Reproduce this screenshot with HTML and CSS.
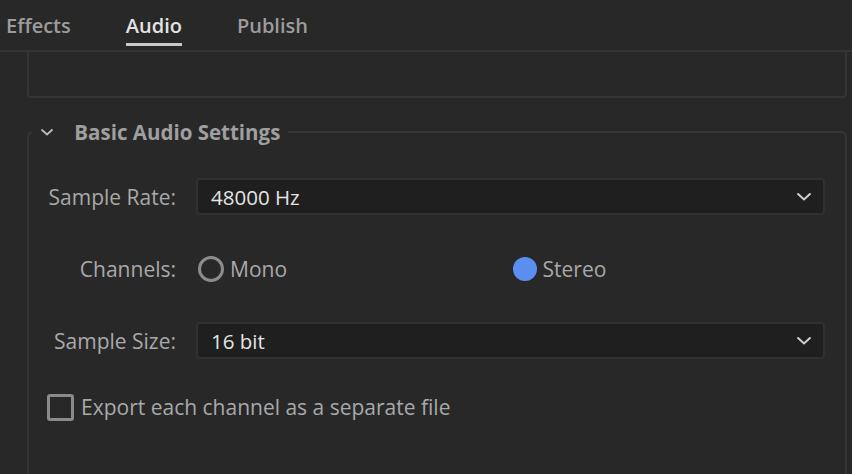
FILE: index.html
```html
<!DOCTYPE html>
<html lang="en">
<head>
    <meta charset="UTF-8">
    <title>Export Settings</title>
    <link rel="stylesheet" href="styles.css">
</head>
<body>
    <div id="wrap">
        <nav class="tabs">
            <a href="#" class="tab">Effects</a>
            <a href="#" class="tab active">Audio</a>
            <a href="#" class="tab">Publish</a>
        </nav>
        <div class="panel">
            <div class="prev_box"></div>
            <fieldset class="group">
                <legend class="group_title">
                    <svg class="twisty" width="14" height="8" viewBox="0 0 14 8"><path d="M1.5 1.5 L7 6.5 L12.5 1.5" fill="none" stroke="#bdbdbd" stroke-width="1.8"/></svg>
                    Basic Audio Settings
                </legend>
                <div class="form">
                    <label class="field_label">Sample Rate:</label>
                    <div class="select">
                        <span>48000 Hz</span>
                        <svg width="16" height="9" viewBox="0 0 16 9"><path d="M1.5 1.5 L8 7.5 L14.5 1.5" fill="none" stroke="#cfcfcf" stroke-width="2"/></svg>
                    </div>

                    <label class="field_label">Channels:</label>
                    <div class="radios">
                        <span class="radio"><i class="dot"></i>Mono</span>
                        <span class="radio"><i class="dot on"></i>Stereo</span>
                    </div>

                    <label class="field_label">Sample Size:</label>
                    <div class="select">
                        <span>16 bit</span>
                        <svg width="16" height="9" viewBox="0 0 16 9"><path d="M1.5 1.5 L8 7.5 L14.5 1.5" fill="none" stroke="#cfcfcf" stroke-width="2"/></svg>
                    </div>
                </div>
                <div class="check">
                    <i class="box"></i>Export each channel as a separate file
                </div>
            </fieldset>
        </div>
    </div>
</body>
</html>
```

FILE: styles.css
```css
/* reset */
html, body {margin: 0; height: 100%;}
body {
    background: #282828;
    font-family: 'Open Sans', 'Noto Sans', sans-serif;
    color: #a9a9a9;
    overflow: hidden;
}
a {text-decoration: none;}
#wrap {height: 474px;}

/* tabs */
.tabs {
    display: flex;
    gap: 55px;
    height: 50px;
    padding-left: 6px;
    border-bottom: 2px solid #353535;
}
.tab {
    position: relative;
    font-size: 20px;
    font-weight: 600;
    line-height: 52px;
    color: #9c9c9c;
}
.tab.active {color: #e2e2e2;}
.tab.active::after {
    content: '';
    position: absolute;
    left: 0;
    right: 0;
    bottom: 4px;
    height: 3px;
    background: #c9c9c9;
}

/* panel */
.panel {padding: 0 5px 0 27px;}
.prev_box {
    height: 44px;
    border: 2px solid #353535;
    border-top: none;
    border-radius: 0 0 4px 4px;
}

/* group box */
.group {
    margin: 22px 0 0;
    padding: 0 20px 60px 0;
    border: 2px solid #353535;
    border-radius: 6px;
    min-width: 0;
}
.group_title {
    margin-left: 3px;
    padding: 0 8px 0 8px;
    font-size: 20.5px;
    font-weight: 700;
    line-height: 24px;
    color: #9f9f9f;
}
.twisty {margin-right: 15px; vertical-align: 4px;}

/* form rows */
.form {
    display: grid;
    grid-template-columns: 147px 1fr;
    column-gap: 20px;
    row-gap: 35px;
    align-items: center;
    margin-top: 34px;
    font-size: 21px;
}
.field_label {text-align: right;}
.select {
    display: flex;
    justify-content: space-between;
    align-items: center;
    height: 33px;
    padding: 0 11px 0 13px;
    background: #1f1f1f;
    border: 2px solid #303030;
    border-radius: 4px;
    font-size: 20.5px;
    color: #e4e4e4;
}
.radios {
    display: grid;
    grid-template-columns: 1fr 1fr;
    height: 37px;
    align-items: center;
}
.radio {
    display: flex;
    align-items: center;
    gap: 6px;
}
.radio:first-child {padding-left: 2px;}
.radio:last-child {padding-left: 2px;}
.dot {
    width: 20px;
    height: 20px;
    border: 3px solid #8c8c8c;
    border-radius: 50%;
}
.dot.on {
    width: 24px;
    height: 24px;
    border: none;
    background: #5a8ef0;
}

/* checkbox */
.check {
    display: flex;
    align-items: center;
    gap: 7px;
    margin: 34px 0 0 18px;
    font-size: 21px;
}
.box {
    width: 21px;
    height: 21px;
    border: 3px solid #8a8a8a;
    border-radius: 3px;
}
```
